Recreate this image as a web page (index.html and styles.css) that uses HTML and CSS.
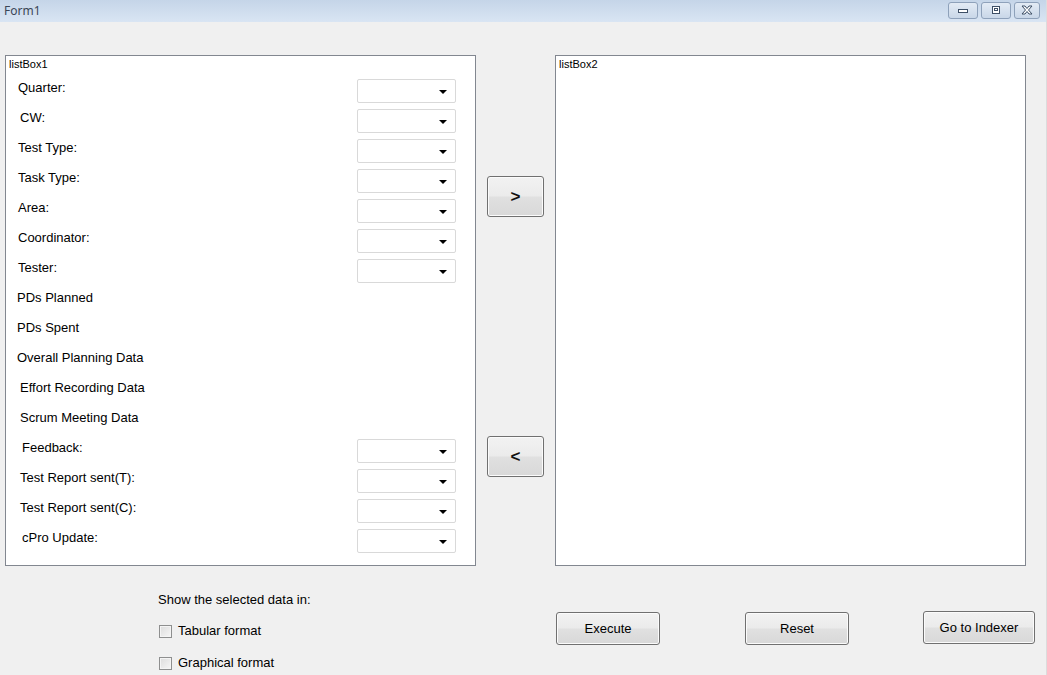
FILE: index.html
```html
<!DOCTYPE html>
<html>
<head>
<meta charset="utf-8">
<title>Form1</title>
<link rel="stylesheet" href="styles.css">
</head>
<body>
<div class="window">
  <div class="titlebar">
    <span class="title">Form1</span>
    <div class="caption-btns">
      <div class="cap-btn"><svg width="12" height="8" viewBox="0 0 12 8"><rect x="1.5" y="3.5" width="9" height="3" fill="#fff" stroke="#3d4f66"/></svg></div>
      <div class="cap-btn"><svg width="12" height="10" viewBox="0 0 12 10"><rect x="2.5" y="1.5" width="7" height="7" fill="#fff" stroke="#3d4f66"/><rect x="4.5" y="3.5" width="3" height="2" fill="none" stroke="#3d4f66"/></svg></div>
      <div class="cap-btn cap-close"><svg width="14" height="10" viewBox="0 0 14 10"><path d="M2 1 L5 1 L7 3.5 L9 1 L12 1 L8.5 5 L12 9 L9 9 L7 6.5 L5 9 L2 9 L5.5 5 Z" fill="#fff" stroke="#3d4f66" stroke-width="1"/></svg></div>
    </div>
  </div>

  <div class="content">
    <div class="listbox lb1">
      <div class="lb-title">listBox1</div>
      <div class="rows">
        <div class="row"><span class="lbl i12">Quarter:</span><div class="combo"><span class="arrow"></span></div></div>
        <div class="row"><span class="lbl i14">CW:</span><div class="combo"><span class="arrow"></span></div></div>
        <div class="row"><span class="lbl i12">Test Type:</span><div class="combo"><span class="arrow"></span></div></div>
        <div class="row"><span class="lbl i12">Task Type:</span><div class="combo"><span class="arrow"></span></div></div>
        <div class="row"><span class="lbl i12">Area:</span><div class="combo"><span class="arrow"></span></div></div>
        <div class="row"><span class="lbl i12">Coordinator:</span><div class="combo"><span class="arrow"></span></div></div>
        <div class="row"><span class="lbl i12">Tester:</span><div class="combo"><span class="arrow"></span></div></div>
        <div class="row"><span class="lbl i11">PDs Planned</span></div>
        <div class="row"><span class="lbl i11">PDs Spent</span></div>
        <div class="row"><span class="lbl i11">Overall Planning Data</span></div>
        <div class="row"><span class="lbl i14">Effort Recording Data</span></div>
        <div class="row"><span class="lbl i14">Scrum Meeting Data</span></div>
        <div class="row"><span class="lbl i16">Feedback:</span><div class="combo"><span class="arrow"></span></div></div>
        <div class="row"><span class="lbl i14">Test Report sent(T):</span><div class="combo"><span class="arrow"></span></div></div>
        <div class="row"><span class="lbl i14">Test Report sent(C):</span><div class="combo"><span class="arrow"></span></div></div>
        <div class="row"><span class="lbl i16">cPro Update:</span><div class="combo"><span class="arrow"></span></div></div>
      </div>
    </div>

    <div class="mid">
      <button class="btn move move-right">&gt;</button>
      <button class="btn move move-left">&lt;</button>
    </div>

    <div class="listbox lb2">
      <div class="lb-title">listBox2</div>
    </div>
  </div>

  <div class="bottom">
    <div class="options">
      <div class="opt-title">Show the selected data in:</div>
      <label class="check"><span class="box"></span>Tabular format</label>
      <label class="check"><span class="box"></span>Graphical format</label>
    </div>
    <button class="btn action execute">Execute</button>
    <button class="btn action reset">Reset</button>
    <button class="btn action indexer">Go to Indexer</button>
  </div>
</div>
</body>
</html>
```

FILE: styles.css
```css
* { box-sizing: border-box; }
html, body { margin: 0; padding: 0; }
body {
  width: 1047px;
  height: 675px;
  overflow: hidden;
  background: #f0f0f0;
  font-family: "Liberation Sans", Arial, sans-serif;
  font-size: 13px;
  color: #000;
}
.window { width: 1047px; height: 675px; position: relative; border-right: 1px solid #dcdcdc; }

.titlebar {
  height: 22px;
  display: flex;
  align-items: center;
  justify-content: space-between;
  background: linear-gradient(#c5d5e8, #d9e5f3);
  padding-left: 4px;
}
.title {
  font-family: "Noto Sans", "DejaVu Sans", sans-serif;
  font-size: 12px;
  color: #3b4656;
  line-height: 22px;
  margin-top: -1px;
}
.caption-btns { display: flex; gap: 3px; margin-right: 6px; margin-top: -2px; }
.cap-btn {
  width: 30px;
  height: 17px;
  border: 1px solid #8ea1ba;
  border-radius: 3px;
  background: linear-gradient(#e3ebf5, #c9d7e8);
  display: flex;
  align-items: center;
  justify-content: center;
}
.cap-close { width: 26px; }

.content {
  display: flex;
  margin-top: 33px;
  padding-left: 5px;
  height: 511px;
}
.listbox {
  width: 471px;
  height: 511px;
  background: #fff;
  border: 1px solid #828790;
}
.lb-title {
  font-size: 11px;
  line-height: 13px;
  padding: 2px 0 0 3px;
  height: 20px;
}
.rows { display: flex; flex-direction: column; }
.row {
  height: 30px;
  display: grid;
  grid-template-columns: 351px 99px;
  align-items: start;
}
.lbl {
  line-height: 16px;
  margin-top: 4px;
  white-space: nowrap;
}
.i11 { padding-left: 11px; }
.i12 { padding-left: 12px; }
.i14 { padding-left: 14px; }
.i16 { padding-left: 16px; }
.combo {
  grid-column: 2;
  margin-top: 3px;
  height: 24px;
  border: 1px solid #d9d9d9;
  border-radius: 2px;
  background: #fff;
  position: relative;
}
.arrow {
  position: absolute;
  right: 8px;
  top: 10px;
  width: 0;
  height: 0;
  border-left: 4px solid transparent;
  border-right: 4px solid transparent;
  border-top: 4px solid #000;
}

.mid {
  width: 79px;
  display: flex;
  flex-direction: column;
  padding-left: 11px;
  padding-top: 121px;
}
.btn {
  font-family: "Liberation Sans", Arial, sans-serif;
  font-size: 13px;
  color: #000;
  border: 1px solid #707070;
  border-radius: 3px;
  background: linear-gradient(#f2f2f2 0%, #ebebeb 48%, #e0e0e0 52%, #d8d8d8 100%);
  padding: 0;
  box-shadow: inset 0 0 0 1px #fbfbfb;
}
.move {
  width: 57px;
  height: 41px;
  font-size: 17px;
  font-weight: bold;
  color: #111;
}
.move-left { margin-top: 219px; }

.bottom {
  display: flex;
  align-items: flex-start;
  padding-top: 26px;
}
.options {
  margin-left: 158px;
  width: 398px;
}
.opt-title { line-height: 16px; }
.check {
  display: flex;
  align-items: center;
  line-height: 16px;
  margin-top: 15px;
  margin-left: 1px;
}
.check + .check { margin-top: 16px; }
.box {
  width: 13px;
  height: 13px;
  border: 1px solid #8e8f8f;
  background: linear-gradient(135deg, #dcdcdc, #f6f6f6);
  box-shadow: inset 0 0 0 1px #f4f4f4;
  margin-right: 6px;
}
.action { height: 33px; }
.execute { width: 104px; margin-top: 20px; }
.reset { width: 104px; margin-top: 20px; margin-left: 85px; }
.indexer { width: 112px; margin-top: 19px; margin-left: 74px; }
```
